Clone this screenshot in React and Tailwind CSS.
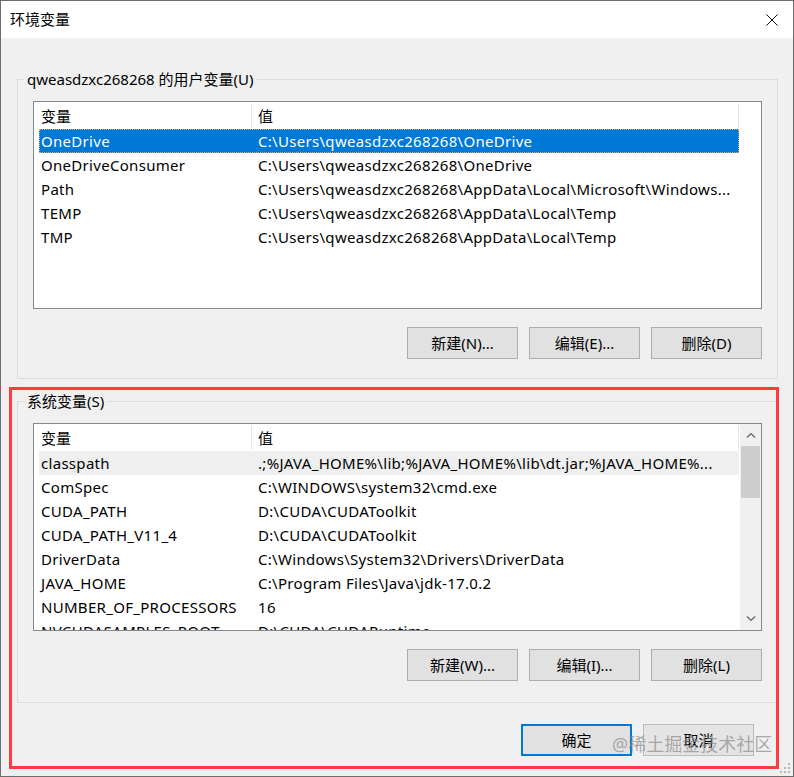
import React from "react";

const userVars = [
  ["OneDrive", "C:\\Users\\qweasdzxc268268\\OneDrive"],
  ["OneDriveConsumer", "C:\\Users\\qweasdzxc268268\\OneDrive"],
  ["Path", "C:\\Users\\qweasdzxc268268\\AppData\\Local\\Microsoft\\Windows..."],
  ["TEMP", "C:\\Users\\qweasdzxc268268\\AppData\\Local\\Temp"],
  ["TMP", "C:\\Users\\qweasdzxc268268\\AppData\\Local\\Temp"],
];

const sysVars = [
  ["classpath", ".;%JAVA_HOME%\\lib;%JAVA_HOME%\\lib\\dt.jar;%JAVA_HOME%..."],
  ["ComSpec", "C:\\WINDOWS\\system32\\cmd.exe"],
  ["CUDA_PATH", "D:\\CUDA\\CUDAToolkit"],
  ["CUDA_PATH_V11_4", "D:\\CUDA\\CUDAToolkit"],
  ["DriverData", "C:\\Windows\\System32\\Drivers\\DriverData"],
  ["JAVA_HOME", "C:\\Program Files\\Java\\jdk-17.0.2"],
  ["NUMBER_OF_PROCESSORS", "16"],
  ["NVCUDASAMPLES_ROOT", "D:\\CUDA\\CUDARuntime"],
];

const Chevron = ({ up }) => (
  <svg width="10" height="6" viewBox="0 0 10 6" className="block">
    <path
      d={up ? "M1 5.5 L5 1.5 L9 5.5" : "M1 0.5 L5 4.5 L9 0.5"}
      fill="none"
      stroke="#606060"
      strokeWidth="1.2"
    />
  </svg>
);

const VarList = ({ rows, selected, hovered, scroll }) => (
  <div className="h-[208px] border border-[#828790] bg-white flex overflow-hidden">
    <div className="flex-1 min-w-0 pl-[5px] overflow-hidden">
      {/* 表头 */}
      <div className="flex h-[27px] w-[700px] items-center">
        <div className="w-[212px] pl-[2px] pt-[2px]">变量</div>
        <div className="w-px h-[24px] bg-[#e5e5e5]" />
        <div className="flex-1 pl-[6px] pt-[2px]">值</div>
        <div className="w-px h-[24px] bg-[#e5e5e5]" />
      </div>
      {rows.map(([name, value], i) => (
        <div
          key={name}
          className={`flex h-[24px] w-[700px] items-center whitespace-nowrap tracking-[0.3px] ${
            i === selected
              ? "bg-[#0078d7] text-white outline outline-1 outline-dotted outline-[#d8b070] -outline-offset-1"
              : i === hovered
              ? "bg-[#efefef]"
              : ""
          }`}
        >
          <div className="w-[217px] pl-[2px] overflow-hidden">{name}</div>
          <div className="flex-1 pl-[2px] overflow-hidden">{value}</div>
        </div>
      ))}
    </div>
    {scroll && (
      <div className="w-[21px] bg-[#f0f0f0] flex flex-col">
        <div className="h-[22px] flex items-center justify-center">
          <Chevron up />
        </div>
        <div className="h-[52px] mx-[1px] bg-[#cdcdcd]" />
        <div className="flex-1" />
        <div className="h-[22px] flex items-center justify-center">
          <Chevron />
        </div>
      </div>
    )}
  </div>
);

const WinButton = ({ children, primary, faded }) => (
  <button
    className={`w-[111px] h-[32px] flex items-center justify-center ${
      primary
        ? "bg-[#e1e1e1] border-2 border-[#0078d7]"
        : faded
        ? "bg-[#e4e4e4] border border-[#bcbcbc]"
        : "bg-[#e1e1e1] border border-[#adadad]"
    }`}
  >
    {children}
  </button>
);

const GroupBox = ({ label, children, className }) => (
  <div className={`relative border border-[#dcdcdc] pt-[21px] px-[15px] ${className}`}>
    <span className="absolute -top-[11px] left-[6px] px-[3px] bg-[#f0f0f0] leading-[20px]">
      {label}
    </span>
    {children}
  </div>
);

export default function App() {
  return (
    <div className="relative w-[794px] h-[777px] border border-[#6d6d6d] bg-[#f0f0f0] text-[15px] text-black font-['Noto_Sans','Noto_Sans_CJK_SC',sans-serif] overflow-hidden">
      {/* 标题栏 */}
      <div className="h-[37px] bg-white flex items-center justify-between pl-[9px] pr-[15px]">
        <span>环境变量</span>
        <svg width="12" height="12" viewBox="0 0 12 12">
          <path d="M0.5 0.5 L11.5 11.5 M11.5 0.5 L0.5 11.5" stroke="#111" strokeWidth="1" />
        </svg>
      </div>

      <div className="pl-[16px] pr-[15px] pt-[41px]">
        <GroupBox label="qweasdzxc268268 的用户变量(U)" className="pb-[19px]">
          <VarList rows={userVars} selected={0} />
          <div className="flex justify-end gap-[11px] mt-[18px]">
            <WinButton>新建(N)...</WinButton>
            <WinButton>编辑(E)...</WinButton>
            <WinButton>删除(D)</WinButton>
          </div>
        </GroupBox>

        <GroupBox label="系统变量(S)" className="pb-[21px] mt-[22px]">
          <VarList rows={sysVars} hovered={0} scroll />
          <div className="flex justify-end gap-[11px] mt-[18px]">
            <WinButton>新建(W)...</WinButton>
            <WinButton>编辑(I)...</WinButton>
            <WinButton>删除(L)</WinButton>
          </div>
        </GroupBox>

        <div className="flex justify-end gap-[11px] mt-[21px] pr-[24px]">
          <WinButton primary>确定</WinButton>
          <WinButton faded>取消</WinButton>
        </div>
      </div>

      {/* 标注红框 */}
      <div className="absolute left-[8px] top-[386px] w-[770px] h-[382px] border-[3px] border-[#ff3b3b] pointer-events-none" />

      {/* 水印 */}
      <div className="absolute left-[611px] top-[730px] text-[18px] text-[#8a8a8a]/70 pointer-events-none">
        @稀土掘金技术社区
      </div>

      {/* 调整大小手柄 */}
      <svg className="absolute right-[2px] bottom-[2px]" width="11" height="11" viewBox="0 0 11 11">
        {[
          [8, 0],
          [4, 4],
          [8, 4],
          [0, 8],
          [4, 8],
          [8, 8],
        ].map(([x, y]) => (
          <rect key={`${x}-${y}`} x={x} y={y} width="2" height="2" fill="#b8b8b8" />
        ))}
      </svg>
    </div>
  );
}
